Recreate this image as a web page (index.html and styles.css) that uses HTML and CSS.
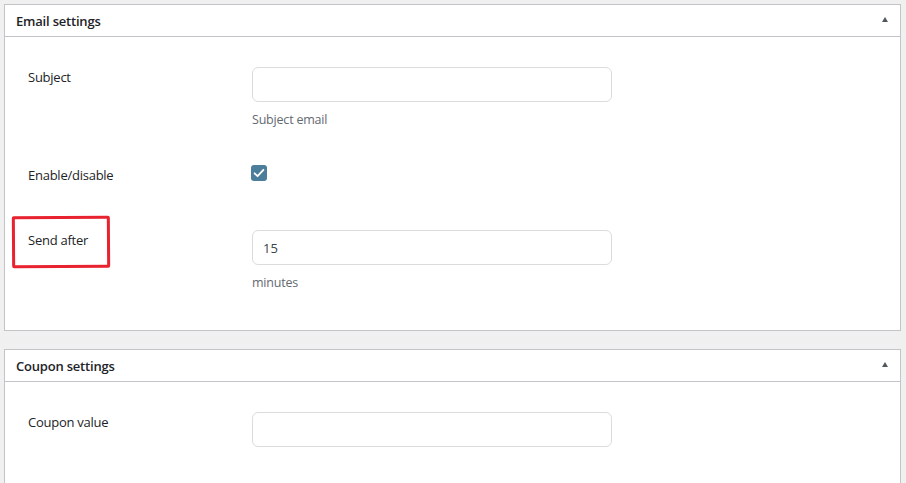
FILE: index.html
```html
<!DOCTYPE html>
<html lang="en">
<head>
<meta charset="utf-8">
<title>Settings</title>
<link rel="stylesheet" href="styles.css">
</head>
<body>
<div class="page">
  <section class="postbox">
    <header class="postbox-head">
      <h2>Email settings</h2>
      <span class="toggle"></span>
    </header>
    <div class="postbox-body">
      <div class="row">
        <div class="label">Subject</div>
        <div class="field">
          <input class="text" type="text">
          <p class="desc">Subject email</p>
        </div>
      </div>
      <div class="row row-check">
        <div class="label">Enable/disable</div>
        <div class="field">
          <span class="checkbox"><svg width="16" height="16" viewBox="0 0 16 16"><path d="M3.6 8.3 L6.6 11.2 L12.4 4.8" fill="none" stroke="#fff" stroke-width="1.8" stroke-linecap="round" stroke-linejoin="round"/></svg></span>
        </div>
      </div>
      <div class="row">
        <div class="label">Send after<span class="mark"></span></div>
        <div class="field">
          <input class="text" type="text" value="15">
          <p class="desc">minutes</p>
        </div>
      </div>
    </div>
  </section>
  <section class="postbox">
    <header class="postbox-head">
      <h2>Coupon settings</h2>
      <span class="toggle"></span>
    </header>
    <div class="postbox-body">
      <div class="row">
        <div class="label">Coupon value</div>
        <div class="field">
          <input class="text" type="text">
        </div>
      </div>
    </div>
  </section>
</div>
</body>
</html>
```

FILE: styles.css
```css
html, body {
  margin: 0;
  padding: 0;
  background: #f0f0f1;
  height: 100%;
  overflow: hidden;
}
body {
  font-family: "Open Sans", "Noto Sans", sans-serif;
  color: #1d2327;
}
.page {
  padding: 4px 5px 0 4px;
  display: flex;
  flex-direction: column;
  gap: 18px;
}
.postbox {
  background: #fff;
  border: 1px solid #c3c4c7;
}
.postbox-head {
  height: 31px;
  border-bottom: 1px solid #c3c4c7;
  display: flex;
  align-items: center;
  justify-content: space-between;
  padding: 0 12px 0 11px;
}
.postbox-head h2 {
  margin: 0;
  font-size: 13px;
  font-weight: 600;
  letter-spacing: -0.2px;
}
.toggle {
  width: 0;
  height: 0;
  border-left: 3.5px solid transparent;
  border-right: 3.5px solid transparent;
  border-bottom: 5px solid #50575e;
  margin-top: -2px;
}
.postbox-body {
  padding: 30px 0 38px 23px;
  display: flex;
  flex-direction: column;
  gap: 36px;
}
.row {
  display: flex;
  align-items: flex-start;
}
.row-check {
  margin-bottom: 9px;
}
.label {
  width: 224px;
  font-size: 13px;
  font-weight: 500;
  line-height: 20px;
  letter-spacing: -0.25px;
  position: relative;
}
.field {
  display: flex;
  flex-direction: column;
}
.text {
  box-sizing: border-box;
  width: 360px;
  height: 35px;
  margin: 0;
  border: 1px solid #dcdcde;
  border-radius: 6px;
  padding: 0 10px;
  font-family: inherit;
  font-size: 13px;
  color: #3c434a;
  background: #fff;
  outline: none;
}
.desc {
  margin: 9px 0 0;
  font-size: 12.5px;
  line-height: 18px;
  color: #646970;
  letter-spacing: -0.2px;
}
.checkbox {
  display: block;
  width: 16px;
  height: 16px;
  border-radius: 3px;
  background: #4a7e9a;
  margin-left: -1px;
}
.checkbox svg {
  display: block;
}
.mark {
  position: absolute;
  left: -16px;
  top: -14px;
  width: 92px;
  height: 46px;
  border: 3px solid #e8222e;
  border-radius: 2px;
  transform: rotate(-0.4deg);
}
```
